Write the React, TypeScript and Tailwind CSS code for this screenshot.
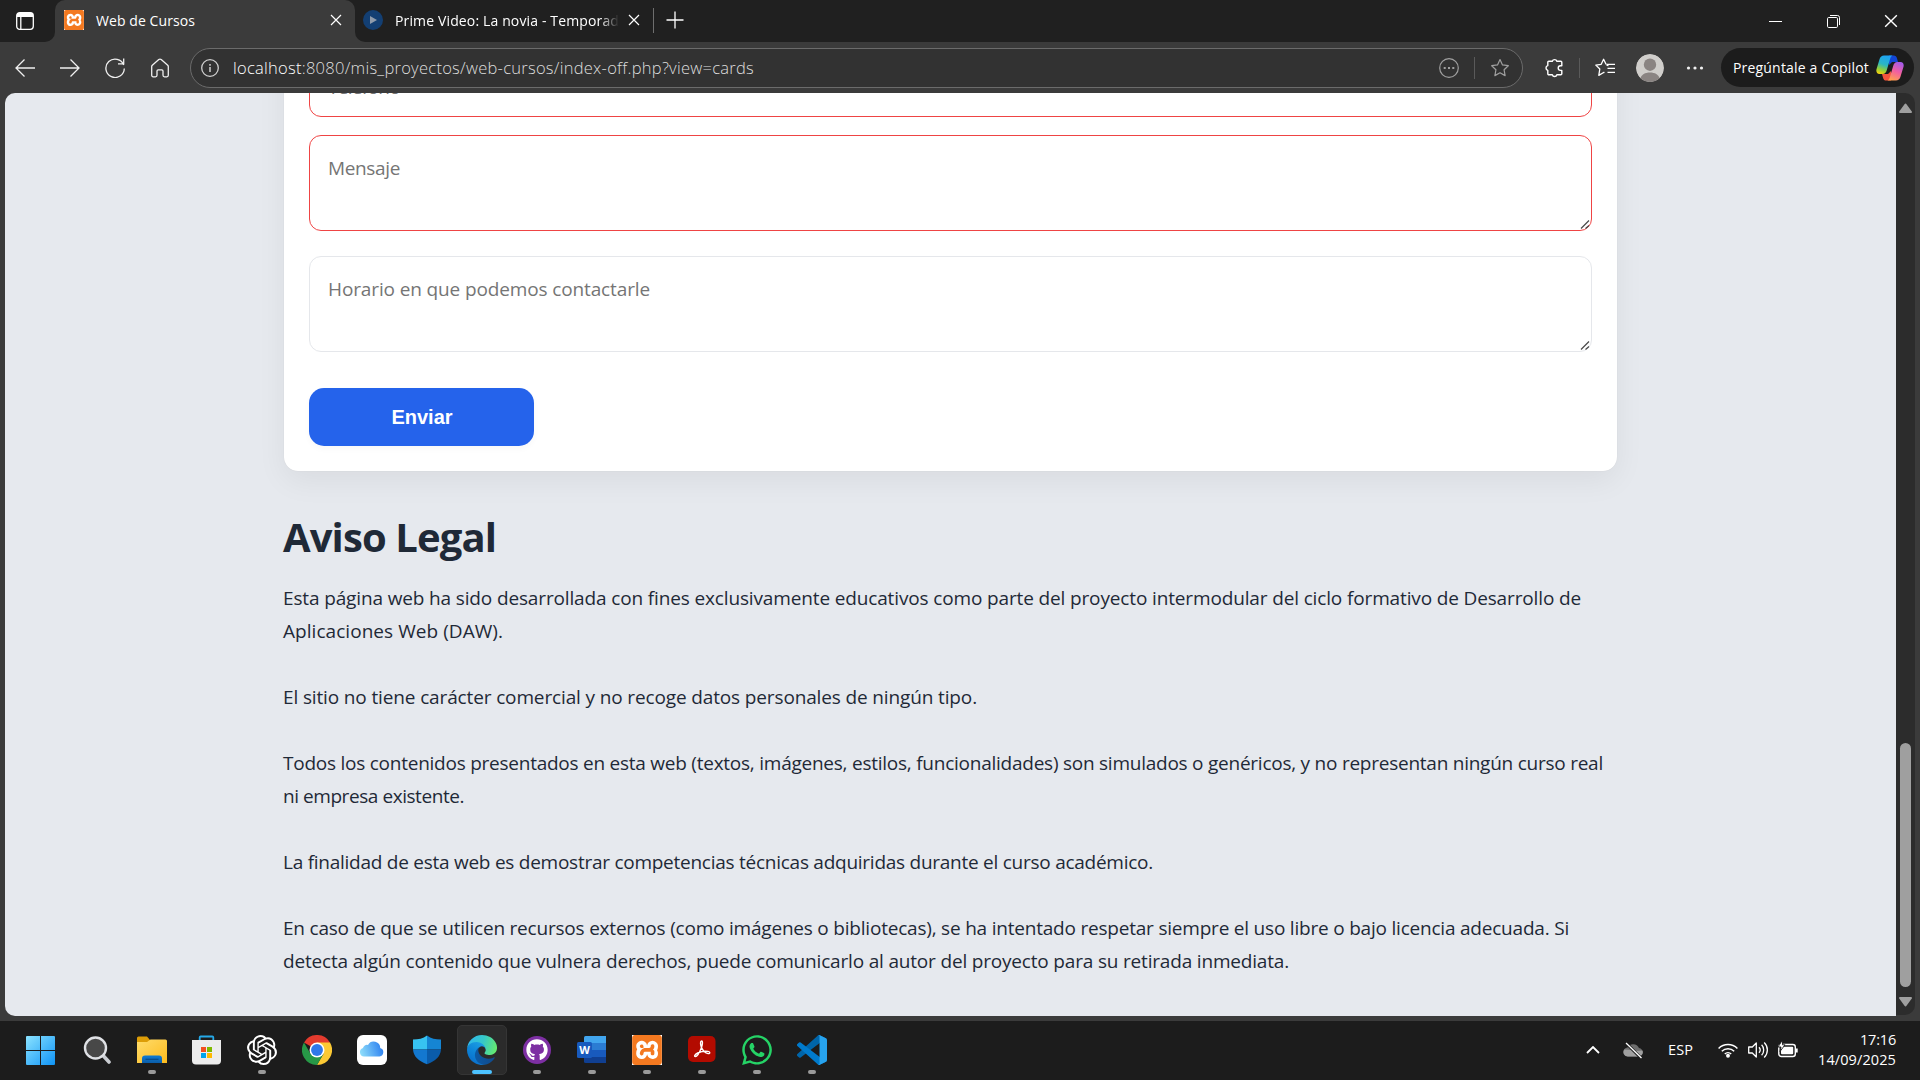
import { useLayoutEffect, useRef, type ReactNode } from "react";
import { SiOpenai, SiXampp } from "react-icons/si";
import { FaGithub, FaWhatsapp } from "react-icons/fa";

/* Text run tracked so that it occupies exactly `width` pixels. */
function Fit({ width, className = "", children }: { width: number; className?: string; children: ReactNode }) {
  const ref = useRef<HTMLSpanElement>(null);
  useLayoutEffect(() => {
    const el = ref.current;
    if (!el) return;
    el.style.letterSpacing = "0px";
    const natural = el.getBoundingClientRect().width;
    const count = (el.textContent || "").length;
    el.style.letterSpacing = `${(width - natural) / count}px`;
  }, [width]);
  return (
    <span ref={ref} className={`inline-block whitespace-pre ${className}`}>
      {children}
    </span>
  );
}

function XamppIcon({ className }: { className: string }) {
  return (
    <span className={`grid place-items-center bg-white ${className}`}>
      <SiXampp className="size-full text-[#f47920]" />
    </span>
  );
}

function Cross({ className }: { className: string }) {
  return (
    <svg viewBox="0 0 12 12" className={className} fill="none" stroke="currentColor" strokeWidth="1.2">
      <path d="M1 1l10 10M11 1L1 11" />
    </svg>
  );
}

function TabStrip() {
  return (
    <div className="flex h-[42px] bg-[#202020] text-white">
      <div className="flex w-[55px] items-center rounded-br-[10px] bg-[#202020] pl-4">
        <svg viewBox="0 0 18 18" className="size-[18px]" fill="none" stroke="#fff" strokeWidth="1.3">
          <rect x="0.7" y="0.7" width="16.6" height="16.6" rx="3" />
          <path d="M1 3h16" strokeWidth="4" />
          <path d="M4.8 4v13" />
        </svg>
      </div>
      <div className="-ml-[10px] flex h-[42px] w-[10px] items-end bg-[#3b3b3b]">
        <div className="h-full w-full rounded-br-[10px] bg-[#202020]" />
      </div>
      <div className="flex h-[42px] w-[300px] items-center rounded-t-[10px] bg-[#3b3b3b] pb-[2px] pl-[9px]">
        <XamppIcon className="size-5" />
        <div className="ml-3 w-[235px]">
          <Fit width={99} className="text-[14px] leading-5">
            Web de Cursos
          </Fit>
        </div>
        <Cross className="-ml-[1px] size-[12px]" />
      </div>
      <div className="h-[42px] w-[10px] bg-[#3b3b3b]">
        <div className="h-full w-full rounded-bl-[10px] bg-[#202020]" />
      </div>
      <div className="-ml-[2px] flex w-[291px] items-center pb-[2px]">
        <svg viewBox="0 0 20 20" className="size-5">
          <circle cx="10" cy="10" r="10" fill="#133f73" />
          <path d="M7 6l7 4-7 4z" fill="#8f9bab" />
        </svg>
        <div className="ml-3 w-[223px] overflow-hidden [mask-image:linear-gradient(to_right,#000_205px,transparent_224px)]">
          <Fit width={232} className="text-[14px] leading-5">
            Prime Video: La novia - Temporada
          </Fit>
        </div>
        <Cross className="ml-[10px] size-[12px]" />
        <div className="ml-[13px] h-[25px] w-px shrink-0 bg-[#6e6e6e]" />
      </div>
      <svg viewBox="0 0 18 18" className="mt-[11px] ml-[12px] size-[18px]" fill="none" stroke="#fff" strokeWidth="1.3">
        <path d="M9 0.5v17M0.5 9h17" />
      </svg>
      <div className="ml-auto flex items-center gap-[45px] pr-[22px]">
        <svg viewBox="0 0 13 13" className="size-[13px]" stroke="#fff">
          <path d="M0 6.5h13" />
        </svg>
        <svg viewBox="0 0 13 13" className="size-[13px]" fill="none" stroke="#fff">
          <rect x="0.5" y="2.5" width="10" height="10" rx="1.2" />
          <path d="M3 0.5h7.5a2 2 0 0 1 2 2V10" />
        </svg>
        <Cross className="-ml-px size-[14px]" />
      </div>
    </div>
  );
}

const STAR = "M10 1.6l2.5 5.3 5.8.8-4.2 4.1 1 5.8-5.1-2.8-5.1 2.8 1-5.8L1.7 7.7l5.8-.8z";

function CopilotLogo() {
  return (
    <svg viewBox="0 0 28 26" className="h-[26px] w-[28px]">
      <defs>
        <linearGradient id="cpA" x1="0.5" y1="0" x2="0.2" y2="1">
          <stop offset="0" stopColor="#1ea3f2" />
          <stop offset="0.45" stopColor="#2ab6c4" />
          <stop offset="0.75" stopColor="#8fce3c" />
          <stop offset="1" stopColor="#fbd20a" />
        </linearGradient>
        <linearGradient id="cpB" x1="0.7" y1="0" x2="0.3" y2="1">
          <stop offset="0" stopColor="#a45bea" />
          <stop offset="0.5" stopColor="#f25fa0" />
          <stop offset="1" stopColor="#ffa04e" />
        </linearGradient>
      </defs>
      <path d="M13 .5h4.6c2 0 2.8 1 3.3 2.6L22 7h-6l-3 3z" fill="#1246d6" />
      <path d="M15 25.5h-4.600c-2 0-2.800-1-3.300-2.600L6 19h6l3-3z" fill="#f5533d" />
      <path d="M8 .5h8.500c-1.600.7-2.200 2.500-2.800 4.700l-2.800 9.600c-.7 2.400-1.700 4.200-4.400 4.200H3.500C.8 19-.1 16.600.5 14.200L3.600 4C4.300 1.700 5.800.5 8 .5z" fill="url(#cpA)" />
      <path d="M20 25.500h-8.500c1.600-.7 2.200-2.500 2.800-4.700l2.800-9.600c.7-2.400 1.700-4.200 4.400-4.200h3c2.700 0 3.600 2.400 3 4.800L24.400 22c-.7 2.300-2.200 3.500-4.400 3.500z" fill="url(#cpB)" />
    </svg>
  );
}

function Toolbar() {
  return (
    <div className="flex h-[51px] items-center bg-[#3b3b3b] pl-[15px] text-white">
      <svg viewBox="0 0 20 20" className="size-5 shrink-0" fill="none" stroke="#f0f0f0" strokeWidth="1.3">
        <path d="M20 10H1M9.500 1.500L1 10l8.500 8.500" />
      </svg>
      <svg viewBox="0 0 20 20" className="ml-[25px] size-5 shrink-0" fill="none" stroke="#f0f0f0" strokeWidth="1.3">
        <path d="M0 10h19M10.500 1.500L19 10l-8.500 8.500" />
      </svg>
      <svg viewBox="0 0 20 20" className="ml-[25px] size-5 shrink-0" fill="none" stroke="#f0f0f0" strokeWidth="1.3">
        <path d="M18.700 7A9.200 9.200 0 1 0 19.300 10.500M18.700 0.500V5.800H13" />
      </svg>
      <svg viewBox="0 0 20 20" className="ml-[25px] size-5 shrink-0" fill="none" stroke="#f0f0f0" strokeWidth="1.3" strokeLinejoin="round">
        <path d="M1.700 8.600c0-.6.200-1 .6-1.400l6.500-5.600c.7-.6 1.700-.6 2.400 0l6.500 5.600c.4.400.6.8.6 1.400v8.700c0 .9-.6 1.500-1.500 1.500h-2.300c-.9 0-1.500-.6-1.500-1.500v-4.200c0-.7-.5-1.200-1.200-1.200H8.200c-.7 0-1.200.5-1.200 1.200v4.200c0 .9-.6 1.500-1.500 1.500H3.200c-.9 0-1.500-.6-1.500-1.500z" />
      </svg>
      <div className="ml-5 flex h-10 w-[1333px] shrink-0 items-center rounded-full border border-[#6b6b6b] bg-[#323232] pl-[10px]">
        <svg viewBox="0 0 18 18" className="size-[18px] shrink-0" fill="none" stroke="#cfcfcf" strokeWidth="1.3">
          <circle cx="9" cy="9" r="8.300" />
          <path d="M9 8v5M9 5v1.700" strokeWidth="1.500" />
        </svg>
        <Fit width={521} className="ml-[14px] text-[16.500px] font-light leading-6 text-[#dedede]">
          <span className="text-white">localhost</span>:8080/mis_proyectos/web-cursos/index-off.php?view=cards
        </Fit>
        <div className="ml-auto flex items-center pr-[12px]">
          <svg viewBox="0 0 20 20" className="size-5" fill="none" stroke="#a0a0a0" strokeWidth="1.200">
            <circle cx="10" cy="10" r="9.300" />
            <path d="M4.700 10h2M9 10h2M13.300 10h2" strokeWidth="2" />
          </svg>
          <div className="ml-[15px] h-[22px] w-px bg-[#5a5a5a]" />
          <svg viewBox="0 0 20 20" className="ml-[15px] size-5" fill="none" stroke="#a0a0a0" strokeWidth="1.200" strokeLinejoin="round">
            <path d={STAR} />
          </svg>
        </div>
      </div>
      <svg viewBox="0 0 20 20" className="ml-[21px] size-5 shrink-0" fill="none" stroke="#fff" strokeWidth="1.400" strokeLinejoin="round">
        <path d="M8.300 3.300a2.400 2.400 0 0 1 4.600 0h3.900a1 1 0 0 1 1 1v3.500h-1.300a2.300 2.300 0 0 0 0 4.600h1.300v3.400a1 1 0 0 1-1 1h-3.900a2.400 2.400 0 0 1-4.600 0H4.800a1 1 0 0 1-1-1v-3.400a2.500 2.500 0 0 1 0-4.800V4.300a1 1 0 0 1 1-1z" />
      </svg>
      <div className="ml-[15px] h-[20px] w-px shrink-0 bg-[#5a5a5a]" />
      <svg viewBox="0 0 20 20" className="ml-[15px] size-5 shrink-0" fill="none" stroke="#fff" strokeWidth="1.300" strokeLinejoin="round">
        <path d="M11.500 6H10.900L8.600 1.300 6.200 6.300.8 7.100l4 3.900-1 6.400 4.800-2.900.9-.2M13.500 7.500l-2-.5M12 6.400h8M12.500 10.400H20M12.500 14.400H20" />
      </svg>
      <svg viewBox="0 0 28 28" className="ml-[21px] size-7 shrink-0 rounded-full">
        <circle cx="14" cy="14" r="14" fill="#d0cecb" />
        <circle cx="14" cy="10.700" r="6.200" fill="#8a8482" />
        <path d="M4 25c1.500-4.500 5-6.500 10-6.500s8.500 2 10 6.500c-2.500 2-6 3-10 3s-7.500-1-10-3z" fill="#8a8482" />
      </svg>
      <svg viewBox="0 0 18 4" className="ml-[22px] h-1 w-[18px] shrink-0" fill="#f0f0f0">
        <circle cx="2.500" cy="2" r="1.600" />
        <circle cx="9" cy="2" r="1.600" />
        <circle cx="15.500" cy="2" r="1.600" />
      </svg>
      <div className="ml-[17px] flex h-[39px] w-[193px] shrink-0 items-center rounded-full bg-[#1c1c1c] pl-[12px]">
        <Fit width={136} className="text-[14px] leading-5">
          Pregúntale a Copilot
        </Fit>
        <div className="ml-[7px]">
          <CopilotLogo />
        </div>
      </div>
    </div>
  );
}

function Field({ label, width, tone, size }: { label: string; width: number; tone: string; size: string }) {
  return (
    <div className={`flex w-[1283px] shrink-0 items-start justify-between rounded-[12px] border bg-white pl-[18px] ${tone} ${size}`}>
      <Fit width={width} className="text-[19px] leading-[33px] text-[#757575]">
        {label}
      </Fit>
      <svg viewBox="0 0 10 10" className="mr-[1px] mb-[1px] size-[10px] self-end" stroke="#4a4a4a" strokeWidth="1.200">
        <path d="M1 9.500L9 1.500M5.500 9.500L9 6.500" />
      </svg>
    </div>
  );
}

const LEGAL: [string, number][][] = [
  [
    ["Esta página web ha sido desarrollada con fines exclusivamente educativos como parte del proyecto intermodular del ciclo formativo de Desarrollo de", 1298],
    ["Aplicaciones Web (DAW).", 220],
  ],
  [["El sitio no tiene carácter comercial y no recoge datos personales de ningún tipo.", 694]],
  [
    ["Todos los contenidos presentados en esta web (textos, imágenes, estilos, funcionalidades) son simulados o genéricos, y no representan ningún curso real", 1320],
    ["ni empresa existente.", 181],
  ],
  [["La finalidad de esta web es demostrar competencias técnicas adquiridas durante el curso académico.", 870]],
  [
    ["En caso de que se utilicen recursos externos (como imágenes o bibliotecas), se ha intentado respetar siempre el uso libre o bajo licencia adecuada. Si", 1286],
    ["detecta algún contenido que vulnera derechos, puede comunicarlo al autor del proyecto para su retirada inmediata.", 1006],
  ],
];

function Page() {
  return (
    <div className="flex h-[923px] w-[1891px] flex-col overflow-hidden rounded-l-[10px] bg-[#e6e9ee] pl-[279px]">
      <div className="-mt-[49px] flex h-[427px] w-[1333px] shrink-0 flex-col rounded-[14px] bg-white pt-[15px] pl-[25px] shadow-[0_10px_30px_rgba(0,0,0,0.06),0_0_1px_rgba(0,0,0,0.12)]">
        <div className="flex h-[58px] w-[1283px] shrink-0 rounded-[12px] border border-[#ef4444] pt-[11px] pl-[18px]">
          <Fit width={72} className="text-[19px] leading-[33px] text-[#757575]">
            Teléfono
          </Fit>
        </div>
        <div className="mt-[18px]">
          <Field label="Mensaje" width={72} tone="border-[#ef4444]" size="h-[96px] pt-[16px]" />
        </div>
        <div className="mt-[25px]">
          <Field label="Horario en que podemos contactarle" width={322} tone="border-[#e5e7eb]" size="h-[96px] pt-[16px]" />
        </div>
        <button className="mt-[36px] h-[58px] w-[225px] shrink-0 rounded-[15px] bg-[#2563eb] pl-px font-['Liberation_Sans',Arial,sans-serif] text-[20px] font-bold text-white shadow-[0_3px_6px_rgba(0,0,0,0.03)]">
          Enviar
        </button>
      </div>
      <h2 className="-ml-px mt-[42px] h-12 shrink-0 leading-[48px] text-[#1f2937]">
        <Fit width={213} className="text-[40px] font-bold">
          Aviso Legal
        </Fit>
      </h2>
      <div className="-ml-px mt-[21px] flex flex-col gap-[33px] text-[19px] leading-[33px] text-[#1f2937]">
        {LEGAL.map((lines, i) => (
          <p key={i} className="flex flex-col items-start">
            {lines.map(([text, width]) => (
              <Fit key={text} width={width}>
                {text}
              </Fit>
            ))}
          </p>
        ))}
      </div>
    </div>
  );
}

function Scrollbar() {
  return (
    <div className="flex h-[922px] w-[19px] flex-col items-center rounded-r-[10px] bg-[#2c2c2c] pt-[10px] pb-[8px]">
      <svg viewBox="0 0 13 10" className="h-[10px] w-[13px]" fill="#9f9f9f" stroke="#9f9f9f" strokeWidth="2" strokeLinejoin="round">
        <path d="M6.500 1.500L12 9H1z" />
      </svg>
      <div className="mt-auto h-[244px] w-[11px] rounded-full bg-[#9f9f9f]" />
      <svg viewBox="0 0 13 10" className="mt-[10px] h-[10px] w-[13px]" fill="#9f9f9f" stroke="#9f9f9f" strokeWidth="2" strokeLinejoin="round">
        <path d="M6.500 8.500L12 1H1z" />
      </svg>
    </div>
  );
}

function StartIcon() {
  return (
    <svg viewBox="0 0 29 29" className="size-[29px]">
      <defs>
        <linearGradient id="win" x1="0" y1="0" x2="1" y2="1">
          <stop offset="0" stopColor="#8be3ff" />
          <stop offset="1" stopColor="#0f93f5" />
        </linearGradient>
      </defs>
      <path d="M1 0h13v14H0V1q0-1 1-1zM15 0h13q1 0 1 1v13H15zM0 15h14v14H1q-1 0-1-1zM15 15h14v13q0 1-1 1H15z" fill="url(#win)" />
    </svg>
  );
}

function SearchIcon() {
  return (
    <svg viewBox="0 0 28 30" className="h-[30px] w-[28px]">
      <path d="M20.500 21l5.500 6" stroke="#c9ccd1" strokeWidth="3.600" strokeLinecap="round" />
      <circle cx="12.500" cy="13" r="10.500" fill="#484848" stroke="#dfe1e5" strokeWidth="2.400" />
    </svg>
  );
}

function FolderIcon() {
  return (
    <svg viewBox="0 0 30 28" className="h-[28px] w-[30px]">
      <defs>
        <linearGradient id="fold" x1="0" y1="0" x2="1" y2="1">
          <stop offset="0" stopColor="#ffdc6b" />
          <stop offset="1" stopColor="#fdbb1d" />
        </linearGradient>
        <linearGradient id="foldB" x1="0" y1="0" x2="0" y2="1">
          <stop offset="0" stopColor="#0f7ad3" />
          <stop offset="1" stopColor="#0b5ea9" />
        </linearGradient>
      </defs>
      <path d="M0 2q0-1.500 1.500-1.500H10l3 3.500v4H0z" fill="#dd9d07" />
      <path d="M0 6h10l3.500-2.500h15q1.500 0 1.500 1.500v22H0z" fill="url(#fold)" />
      <path d="M5 27v-4.500Q5 19.500 8 19.500h14q3 0 3 3V27z" fill="url(#foldB)" />
      <path d="M8.500 23.300h13" stroke="#074a8a" strokeWidth="1.200" />
    </svg>
  );
}

function StoreIcon() {
  return (
    <svg viewBox="0 0 29 30" className="h-[30px] w-[29px]">
      <path d="M7.700 6V2.500q0-1 1-1h11.600q1 0 1 1V6" fill="none" stroke="#25a9e8" strokeWidth="1.800" />
      <path d="M0 5h29v20.500q0 4-4 4H4q-4 0-4-4z" fill="#ececec" />
      <path d="M9 12h5v5H9z" fill="#f25022" />
      <path d="M15 12h5v5h-5z" fill="#7fba00" />
      <path d="M9 18h5v5H9z" fill="#00a4ef" />
      <path d="M15 18h5v5h-5z" fill="#ffb900" />
    </svg>
  );
}

function ChromeIcon() {
  return (
    <svg viewBox="0 0 48 48" className="size-[30px]">
      <path d="M24 24L3.200 12A24 24 0 0 1 44.800 12z" fill="#e33b2e" />
      <path d="M24 12h20.800A24 24 0 0 1 24 48l10.400-18z" fill="#fcc934" />
      <path d="M34.400 30L24 48A24 24 0 0 1 3.200 12l10.400 18L24 36z" fill="#279847" />
      <circle cx="24" cy="24" r="12" fill="#fff" />
      <circle cx="24" cy="24" r="9.500" fill="#2f78ea" />
    </svg>
  );
}

function CloudIcon() {
  return (
    <svg viewBox="0 0 30 30" className="size-[30px]">
      <defs>
        <linearGradient id="icl" x1="0" y1="0.600" x2="1" y2="0.400">
          <stop offset="0" stopColor="#8edcfa" />
          <stop offset="1" stopColor="#2b7ff0" />
        </linearGradient>
      </defs>
      <rect width="30" height="30" rx="6" fill="#fff" />
      <path d="M7 21.500a4.300 4.300 0 0 1-1-8.400 4 4 0 0 1 5-3.200 6.500 6.500 0 0 1 12.200 3.200 4.300 4.300 0 0 1-.7 8.400z" fill="url(#icl)" />
    </svg>
  );
}

function ShieldIcon() {
  return (
    <svg viewBox="0 0 28 30" className="h-[30px] w-[28px]">
      <path d="M14 .5C10 3.500 5.500 4.500 0 4.500v10h14z" fill="#37c3f1" />
      <path d="M14 .5c4 3 8.500 4 14 4v10H14z" fill="#1585d3" />
      <path d="M0 14.500h14v14.800C5.500 26 .5 21.500 0 14.500z" fill="#1378d0" />
      <path d="M28 14.500H14v14.800C22.500 26 27.500 21.500 28 14.500z" fill="#0a5cab" />
    </svg>
  );
}

function EdgeIcon() {
  return (
    <svg viewBox="0 0 256 256" className="size-[30px]">
      <defs>
        <linearGradient id="edA" x1="0.100" y1="0.600" x2="1" y2="0.600">
          <stop offset="0" stopColor="#0c59a4" />
          <stop offset="1" stopColor="#114a8b" />
        </linearGradient>
        <linearGradient id="edB" x1="0.700" y1="0.100" x2="0.300" y2="0.900">
          <stop offset="0" stopColor="#1b9de2" />
          <stop offset="0.500" stopColor="#0e86d8" />
          <stop offset="1" stopColor="#0a70cc" />
        </linearGradient>
        <linearGradient id="edC" x1="0" y1="0.400" x2="1" y2="0.600">
          <stop offset="0" stopColor="#2fb8ee" />
          <stop offset="0.500" stopColor="#36c8c8" />
          <stop offset="1" stopColor="#66eb6e" />
        </linearGradient>
      </defs>
      <path d="M231 190.500a93.700 93.700 0 0 1-10.500 4.700 101.900 101.900 0 0 1-35.900 6.400c-47.300 0-88.500-32.500-88.500-74.300a31.500 31.500 0 0 1 16.400-27.300c-42.800 1.800-53.800 46.400-53.800 72.500 0 74 68.100 81.400 82.800 81.400 7.900 0 19.800-2.300 27-4.600l1.300-.4a128.300 128.300 0 0 0 66.600-52.800 4 4 0 0 0-5.400-5.600z" fill="url(#edA)" />
      <path d="M105.700 241.400A79.200 79.200 0 0 1 83 220a80.700 80.700 0 0 1 29.500-120c3.100-1.500 8.500-4.100 15.600-4a32.400 32.400 0 0 1 25.700 13 31.900 31.900 0 0 1 6.300 18.700c0-.2 24.500-79.600-80-79.600-43.900 0-80 41.600-80 78.200a130.100 130.100 0 0 0 12.100 56 128 128 0 0 0 156.400 67 75.500 75.500 0 0 1-62.800-8z" fill="url(#edB)" />
      <path d="M152.300 148.900c-.9 1-3.400 2.500-3.400 5.600 0 2.600 1.700 5.200 4.800 7.300 14.400 10.100 41.700 8.700 41.800 8.700a59.600 59.600 0 0 0 30.300-8.300 61.400 61.400 0 0 0 30.400-52.900c.3-22.400-8-37.300-11.300-43.900C223.500 23.900 177.700 0 128 0A128 128 0 0 0 0 126.200c.5-36.500 36.800-66 80-66 3.500 0 23.500.3 42 10 16.300 8.600 24.900 18.900 30.800 29.200 6.200 10.700 7.300 24.100 7.300 29.500 0 5.300-2.700 13.300-7.800 19.900z" fill="url(#edC)" />
    </svg>
  );
}

function WordIcon() {
  return (
    <svg viewBox="0 0 30 28" className="h-[28px] w-[30px]">
      <path d="M7 7V1.500Q7 0 8.500 0H29v7z" fill="#41a5ee" />
      <path d="M7 7h22v7H7z" fill="#2b7cd3" />
      <path d="M7 14h22v7H7z" fill="#185abd" />
      <path d="M7 21h22v6H8.500Q7 27 7 25.500z" fill="#103f91" />
      <rect y="6" width="15" height="16" rx="1.500" fill="#185abd" />
      <text x="7.500" y="18" textAnchor="middle" fontSize="11" fontWeight="700" fill="#fff">
        W
      </text>
    </svg>
  );
}

function AcrobatIcon() {
  return (
    <svg viewBox="0 0 28 28" className="mb-[3px] size-[28px]">
      <rect y="1" width="27.500" height="26" rx="5" fill="#b30b00" />
      <path
        d="M13.500 6c1.700 0 .8 4.500-.4 7.500-1.300 3.300-3.900 8-5.700 8-1.600 0-.7-2.200 2.300-3.500 3-1.300 7.500-2.200 10.300-1.600 2.500.5 2.200 2.600.2 2.200-2.600-.5-5.700-3.600-6.900-6.600C12.300 9.500 12.200 6 13.500 6z"
        fill="none"
        stroke="#fff"
        strokeWidth="1.400"
      />
    </svg>
  );
}

function CodeIcon() {
  return (
    <svg viewBox="0 0 100 100" className="size-[30px]">
      <path d="M96.500 10.800L75.900.9a6.200 6.200 0 0 0-7.100 1.200L1.300 63.600a4.200 4.200 0 0 0 0 6.200l5.500 5a4.200 4.200 0 0 0 5.400.2l81.200-61.600c2.700-2.100 6.600-.1 6.600 3.300v-.3c0-2.400-1.400-4.600-3.500-5.600z" fill="#0065a9" />
      <path d="M96.500 89.200l-20.600 9.900a6.200 6.200 0 0 1-7.100-1.200L1.300 36.400a4.200 4.200 0 0 1 0-6.200l5.500-5a4.200 4.200 0 0 1 5.400-.2l81.200 61.600c2.700 2.100 6.600.1 6.600-3.300v.300c0 2.400-1.400 4.600-3.500 5.600z" fill="#007acc" />
      <path d="M75.900 99.100a6.200 6.200 0 0 1-7.100-1.200c2.300 2.300 6.200.7 6.200-2.600V4.700c0-3.300-3.900-4.900-6.200-2.600A6.200 6.200 0 0 1 75.900.9l20.600 9.900a6.200 6.200 0 0 1 3.500 5.600v67.200c0 2.400-1.400 4.600-3.500 5.600z" fill="#27a3ee" />
    </svg>
  );
}

function TaskItem({ children, mark }: { children: ReactNode; mark?: "open" | "active" }) {
  return (
    <div className="flex w-[55px] shrink-0 justify-center">
      <div className={mark === "active" ? "flex h-[50px] w-[50px] flex-col items-center rounded-[5px] border border-[#353535] bg-[#2b2b2b]" : "flex h-[50px] w-[50px] flex-col items-center border border-transparent"}>
        <div className="flex h-[46px] items-center pt-[2px]">{children}</div>
        {mark === "open" && <div className="-mt-[2px] h-1 w-2 shrink-0 rounded-full bg-[#9a9a9a]" />}
        {mark === "active" && <div className="-mt-[2px] h-1 w-5 shrink-0 rounded-full bg-[#4cc2ff]" />}
      </div>
    </div>
  );
}

function Taskbar() {
  return (
    <div className="flex h-[59px] bg-[#1c1c1c] pt-1 pl-[13px] text-white">
      <TaskItem><StartIcon /></TaskItem>
      <div className="ml-px flex">
        <TaskItem><SearchIcon /></TaskItem>
        <TaskItem mark="open"><FolderIcon /></TaskItem>
        <TaskItem><StoreIcon /></TaskItem>
        <TaskItem mark="open"><SiOpenai className="size-[30px]" /></TaskItem>
        <TaskItem><ChromeIcon /></TaskItem>
        <TaskItem><CloudIcon /></TaskItem>
        <TaskItem><ShieldIcon /></TaskItem>
        <TaskItem mark="active"><EdgeIcon /></TaskItem>
        <TaskItem mark="open">
          <span className="grid size-[28px] place-items-center rounded-full bg-[#7d2fa3]">
            <FaGithub className="size-[22px]" />
          </span>
        </TaskItem>
        <TaskItem mark="open"><WordIcon /></TaskItem>
        <TaskItem mark="open"><XamppIcon className="size-[30px]" /></TaskItem>
        <TaskItem mark="open"><AcrobatIcon /></TaskItem>
        <TaskItem mark="open"><FaWhatsapp className="size-[34px] text-[#25d366]" /></TaskItem>
        <TaskItem mark="open"><CodeIcon /></TaskItem>
      </div>
      <div className="mr-[24px] ml-auto flex h-[50px] items-center">
        <svg viewBox="0 0 14 8" className="h-2 w-[14px]" fill="none" stroke="#fff" strokeWidth="1.800">
          <path d="M1 7l6-6 6 6" />
        </svg>
        <svg viewBox="0 0 20 17" className="ml-[23px] h-[17px] w-5">
          <path d="M5 14.500a4.500 4.500 0 0 1-.5-9A6.500 6.500 0 0 1 16 6a4.300 4.300 0 0 1-.5 8.500z" fill="#6d6d6d" />
          <path d="M5 14.500a4.300 4.300 0 0 1-3.500-7l6 .5 4 1 8-.500a4.300 4.300 0 0 1-4 6z" fill="#a0a0a0" />
          <path d="M3 1l15 15" stroke="#1c1c1c" strokeWidth="3" />
          <path d="M3 1l15.500 15" stroke="#fff" strokeWidth="1.300" />
        </svg>
        <Fit width={25} className="ml-[25px] text-[14.500px] leading-5">
          ESP
        </Fit>
        <svg viewBox="0 0 20 16" className="ml-[25px] h-4 w-5" fill="none" stroke="#fff" strokeWidth="1.500">
          <path d="M.6 6.500a13.300 13.300 0 0 1 18.800 0M3.800 9.300a8.800 8.800 0 0 1 12.400 0M6.800 12a4.600 4.600 0 0 1 6.400 0" />
          <circle cx="10" cy="13.700" r="1.200" fill="#fff" />
        </svg>
        <svg viewBox="0 0 20 18" className="ml-[10px] h-[18px] w-5" fill="none" stroke="#fff" strokeWidth="1.300" strokeLinejoin="round">
          <path d="M.7 6h3.600l4-4v14l-4-4H.7zM11 6.300a4 4 0 0 1 0 5.400M13.600 3.800a7.500 7.500 0 0 1 0 10.400M16.200 1.500a10.500 10.500 0 0 1 0 15" />
        </svg>
        <svg viewBox="0 0 20 18" className="-mt-[2px] ml-[10px] h-[18px] w-5" fill="none" stroke="#fff" strokeWidth="1.400">
          <rect x="0.800" y="4.500" width="16.500" height="12" rx="2.500" />
          <rect x="3" y="6.700" width="12.200" height="7.600" rx="1" fill="#fff" stroke="none" />
          <path d="M18.700 8.500v4" strokeWidth="2" />
          <path d="M4.500 0L0 7h3l-1 4.500L7 4.800H4.500z" fill="#fff" stroke="#1c1c1c" strokeWidth="0.900" />
        </svg>
        <div className="ml-[20px] flex flex-col items-end leading-5">
          <Fit width={36} className="text-[14.500px]">17:16</Fit>
          <Fit width={78} className="text-[14.500px]">14/09/2025</Fit>
        </div>
      </div>
    </div>
  );
}

export default function App() {
  return (
    <div className="flex h-[1080px] w-[1920px] flex-col overflow-hidden bg-[#3b3b3b] font-['Open_Sans','Noto_Sans',sans-serif]">
      <TabStrip />
      <Toolbar />
      <div className="flex h-[928px] pl-[5px]">
        <Page />
        <Scrollbar />
      </div>
      <Taskbar />
    </div>
  );
}
